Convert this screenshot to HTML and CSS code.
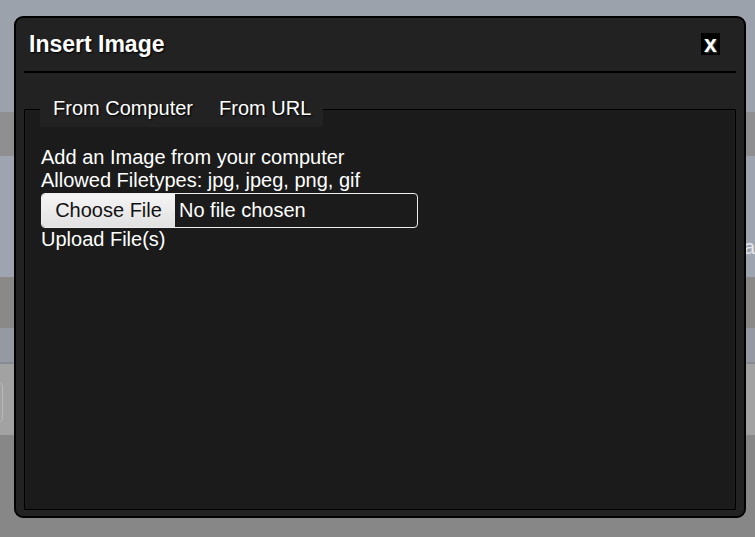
FILE: index.html
```html
<!DOCTYPE html>
<html lang="en">
<head>
<meta charset="utf-8">
<title>Insert Image</title>
<link rel="stylesheet" href="styles.css">
</head>
<body>
<div class="page">
  <div class="band b1"></div>
  <div class="band b2"></div>
  <div class="band b3"><span class="peek">ga</span></div>
  <div class="band b4"></div>
  <div class="band b5"></div>
  <div class="band b6"><div class="ghost-btn"></div></div>
  <div class="band b7"></div>
</div>

<div class="modal" role="dialog" aria-labelledby="modal-title">
  <div class="modal-header">
    <h2 class="modal-title" id="modal-title">Insert Image</h2>
    <button class="close" type="button">x</button>
  </div>
  <div class="modal-body">
    <ul class="tabs">
      <li class="tab">From Computer</li>
      <li class="tab">From URL</li>
    </ul>
    <div class="panel">
      <p class="line">Add an Image from your computer</p>
      <p class="line">Allowed Filetypes: jpg, jpeg, png, gif</p>
      <div class="file">
        <span class="choose">Choose File</span>
        <span class="nofile">No file chosen</span>
      </div>
      <p class="line">Upload File(s)</p>
    </div>
  </div>
</div>
</body>
</html>
```

FILE: styles.css
```css
html, body {
  margin: 0;
  padding: 0;
}

body {
  width: 755px;
  height: 537px;
  overflow: hidden;
  font-family: "Liberation Sans", Arial, sans-serif;
  position: relative;
}

/* dimmed page behind the dialog */
.page {
  display: flex;
  flex-direction: column;
  height: 537px;
}

.band { flex: none; overflow: hidden; white-space: nowrap; }
.b1 { height: 112px; background: #9ca2ac; }
.b2 { height: 44px; background: #8f8f91; }
.b3 { height: 121px; background: #9ea5b0; padding-left: 733px; padding-top: 80px; box-sizing: border-box; }
.b4 { height: 51px; background: #8b8987; }
.b5 { height: 34px; background: #9599a2; border-bottom: 2px solid #878a90; }
.b6 { height: 71px; background: #a2a2a2; padding-top: 18px; box-sizing: border-box; }
.b7 { flex: 1; background: #878787; }

.peek {
  font-size: 20px;
  line-height: 23px;
  color: #e4e6ea;
}

.ghost-btn {
  width: 43px;
  height: 41px;
  margin-left: -40px;
  border: 1px solid #b8b8b8;
  border-radius: 5px;
  box-sizing: border-box;
}

/* dialog */
.modal {
  position: absolute;
  left: 14px;
  top: 16px;
  width: 732px;
  height: 502px;
  box-sizing: border-box;
  background: #222222;
  border: 2px solid #000;
  border-radius: 9px;
  display: flex;
  flex-direction: column;
  color: #fff;
}

.modal-header {
  display: flex;
  align-items: center;
  justify-content: space-between;
  margin: 0 8px;
  padding: 13px 16px 14px 5px;
  border-bottom: 2px solid #000;
}

.modal-title {
  margin: 0;
  font-size: 23px;
  font-weight: bold;
  line-height: 26px;
  text-shadow: 1px 1px 2px #000;
}

.close {
  width: 19px;
  height: 22px;
  padding: 0;
  border: 0;
  background: #000;
  color: #fff;
  font-family: "Liberation Sans", Arial, sans-serif;
  font-size: 23px;
  font-weight: bold;
  line-height: 18px;
  text-align: center;
  text-shadow: 1px 1px 2px #555;
}

.modal-body {
  flex: 1;
  display: flex;
  flex-direction: column;
  padding: 22px 8px 6px;
}

.tabs {
  list-style: none;
  margin: 0 0 -18px 16px;
  padding: 0;
  display: flex;
  align-self: flex-start;
  background: #222222;
  position: relative;
  z-index: 1;
}

.tab {
  font-size: 20px;
  line-height: 23px;
  padding: 2px 13px 7px;
  text-shadow: 1px 1px 2px #000;
}

.tab + .tab {
  padding-left: 13px;
  padding-right: 12px;
}

.panel {
  flex: 1;
  background: #1b1b1b;
  border: 1px solid #000;
  padding: 36px 16px 0;
}

.line {
  margin: 0;
  font-size: 20px;
  line-height: 23px;
}

.file {
  display: flex;
  align-items: stretch;
  width: 377px;
  height: 35px;
  margin-top: 1px;
  box-sizing: border-box;
  border: 1px solid #ededed;
  border-radius: 4px;
  font-size: 20px;
}

.choose {
  width: 133px;
  display: flex;
  align-items: center;
  justify-content: center;
  color: #111;
  background: linear-gradient(#f5f5f5, #e1e1e1);
  border-radius: 3px 0 0 3px;
}

.nofile {
  display: flex;
  align-items: center;
  padding-left: 4px;
  color: #fff;
}
```
